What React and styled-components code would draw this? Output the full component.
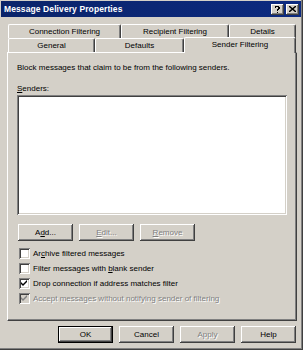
import React from 'react';
import styled, { createGlobalStyle } from 'styled-components';

const Global = createGlobalStyle`
  html, body { margin: 0; padding: 0; background: #d4d0c8; }
  body { font-family: "Liberation Sans", Arial, sans-serif; font-size: 8px; color: #000; }
  * { box-sizing: border-box; }
`;

const Window = styled.div`
  width: 303px;
  height: 350px;
  background: #d4d0c8;
  padding: 1px 2px 2px 1px;
  box-shadow: inset -1px -1px #404040, inset -2px -2px #808080;
  display: flex;
  flex-direction: column;
`;

const TitleBar = styled.div`
  height: 16px;
  background: linear-gradient(90deg, #0a246a 0%, #0c2a80 100%);
  display: flex;
  align-items: center;
  padding: 0 2px 0 3px;
`;

const TitleText = styled.div`
  flex: 1;
  color: #fff;
  font-weight: bold;
  font-size: 8.5px;
  letter-spacing: 0.1px;
`;

const CaptionButton = styled.div`
  width: 13px;
  height: 11px;
  margin-left: ${p => p.$gap || 0}px;
  background: #d4d0c8;
  box-shadow: inset -1px -1px #404040, inset 1px 1px #fff, inset -2px -2px #808080;
  display: flex;
  align-items: center;
  justify-content: center;
`;

const Body = styled.div`
  flex: 1;
  display: flex;
  flex-direction: column;
  padding: 7px 4px 0 6px;
`;

const TabStrip = styled.div`
  display: flex;
  flex-direction: column;
  padding-left: 1px;
`;

const TabRow = styled.div`
  display: flex;
  height: 14px;
  align-items: flex-end;
`;

const Tab = styled.div`
  width: ${p => p.$w}px;
  height: ${p => (p.$active ? 16 : 14)}px;
  margin-bottom: ${p => (p.$active ? -1 : 0)}px;
  position: relative;
  z-index: ${p => (p.$active ? 2 : 1)};
  background: #d4d0c8;
  border-top: 1px solid #fff;
  border-left: 1px solid #fff;
  border-right: 1px solid #404040;
  box-shadow: inset -1px 0 #808080;
  border-radius: 2px 2px 0 0;
  display: flex;
  align-items: center;
  justify-content: center;
  padding-bottom: ${p => (p.$active ? 2 : 0)}px;
`;

const Panel = styled.div`
  height: 269px;
  background: #d4d0c8;
  border-top: 1px solid #fff;
  border-left: 1px solid #fff;
  border-right: 1px solid #404040;
  border-bottom: 1px solid #404040;
  box-shadow: inset -1px -1px #808080;
  padding: 9px 9px 0 9px;
  display: flex;
  flex-direction: column;
`;

const Line = styled.div`
  line-height: 11px;
  height: 11px;
  white-space: nowrap;
`;

const Label = styled(Line)`
  margin-top: 10px;
`;

const ListBox = styled.div`
  margin-top: 1px;
  height: 120px;
  background: #fff;
  box-shadow: inset 1px 1px #808080, inset -1px -1px #fff, inset 2px 2px #404040, inset -2px -2px #d4d0c8;
`;

const ButtonRow = styled.div`
  display: flex;
  gap: ${p => p.$gap}px;
  margin-top: ${p => p.$top}px;
  padding-left: ${p => p.$left || 0}px;
`;

const Button = styled.div`
  width: 55px;
  height: 17px;
  background: #d4d0c8;
  display: flex;
  align-items: center;
  justify-content: center;
  color: ${p => (p.$disabled ? '#808080' : '#000')};
  text-shadow: ${p => (p.$disabled ? '1px 1px #fff' : 'none')};
  box-shadow: ${p =>
    p.$default
      ? 'inset 0 0 0 1px #000, inset -2px -2px #404040, inset 2px 2px #fff, inset -3px -3px #808080'
      : 'inset -1px -1px #404040, inset 1px 1px #fff, inset -2px -2px #808080'};
`;

const Checks = styled.div`
  margin-top: 5px;
  display: flex;
  flex-direction: column;
  padding-left: 2px;
`;

const CheckRow = styled.div`
  height: 15px;
  display: flex;
  align-items: center;
  gap: 3px;
  color: ${p => (p.$disabled ? '#808080' : '#000')};
  text-shadow: ${p => (p.$disabled ? '1px 1px #fff' : 'none')};
  white-space: nowrap;
`;

const Box = styled.div`
  width: 11px;
  height: 11px;
  flex: none;
  background: ${p => (p.$disabled ? '#d4d0c8' : '#fff')};
  box-shadow: inset 1px 1px #808080, inset -1px -1px #fff, inset 2px 2px #404040, inset -2px -2px #d4d0c8;
  display: flex;
  align-items: center;
  justify-content: center;
`;

const Footer = styled.div`
  display: flex;
  justify-content: flex-end;
  gap: 6px;
  margin-top: 5px;
  padding-right: 1px;
`;

const U = styled.span`
  text-decoration: underline;
`;

function Check({ checked, disabled, children }) {
  return (
    <CheckRow $disabled={disabled}>
      <Box $disabled={disabled}>
        {checked && (
          <svg width="7" height="7" viewBox="0 0 7 7">
            <path d="M0 2 L2 4 L6 0 L6 2 L2 6 L0 4 Z" fill={disabled ? '#808080' : '#000'} />
          </svg>
        )}
      </Box>
      <span>{children}</span>
    </CheckRow>
  );
}

export default function App() {
  return (
    <>
      <Global />
      <Window>
        <TitleBar>
          <TitleText>Message Delivery Properties</TitleText>
          <CaptionButton>
            <svg width="7" height="8" viewBox="0 0 7 8">
              <path d="M1 1 H5 V2 H6 V4 H5 V5 H4 V6 H3 V4 H4 V2 H2 V3 H1 Z M3 7 H4 V8 H3 Z" fill="#000" />
            </svg>
          </CaptionButton>
          <CaptionButton $gap={2}>
            <svg width="7" height="6" viewBox="0 0 7 6">
              <path d="M0 0 L7 6 M7 0 L0 6" stroke="#000" strokeWidth="1.4" fill="none" />
            </svg>
          </CaptionButton>
        </TitleBar>
        <Body>
          <TabStrip>
            <TabRow>
              <Tab $w={113}>Connection Filtering</Tab>
              <Tab $w={108}>Recipient Filtering</Tab>
              <Tab $w={67}>Details</Tab>
            </TabRow>
            <TabRow>
              <Tab $w={87}>General</Tab>
              <Tab $w={89}>Defaults</Tab>
              <Tab $w={112} $active>Sender Filtering</Tab>
            </TabRow>
          </TabStrip>
          <Panel>
            <Line>Block messages that claim to be from the following senders.</Line>
            <Label><U>S</U>enders:</Label>
            <ListBox />
            <ButtonRow $gap={6} $top={9} $left={1}>
              <Button>A<U>d</U>d...</Button>
              <Button $disabled><U>E</U>dit...</Button>
              <Button $disabled><U>R</U>emove</Button>
            </ButtonRow>
            <Checks>
              <Check>Ar<U>c</U>hive filtered messages</Check>
              <Check>Filter messages with <U>b</U>lank sender</Check>
              <Check checked>Drop connection if address matches filter</Check>
              <Check checked disabled>Accept messages without notifying sender of filtering</Check>
            </Checks>
          </Panel>
          <Footer>
            <Button $default>OK</Button>
            <Button>Cancel</Button>
            <Button $disabled>Apply</Button>
            <Button>Help</Button>
          </Footer>
        </Body>
      </Window>
    </>
  );
}
